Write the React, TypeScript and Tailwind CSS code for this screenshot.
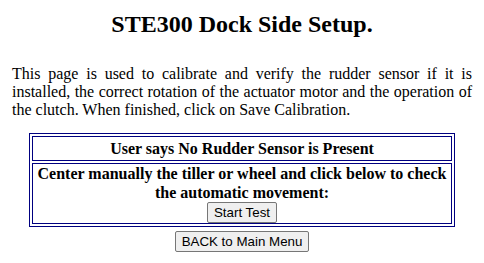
export default function App() {
  return (
    <div className="min-h-[263px] bg-white px-[12px] pt-[10px] font-['Liberation_Serif',serif] text-black">
      <h2 className="text-center text-[24px] font-bold leading-[28px]">STE300 Dock Side Setup.</h2>
      <p className="mt-[27px] text-justify text-[16px] leading-[18px]">
        This page is used to calibrate and verify the rudder sensor if it is installed, the correct rotation of the
        actuator motor and the operation of the clutch. When finished, click on Save Calibration.
      </p>
      <div className="mx-auto mt-[14px] flex w-[426px] flex-col gap-[2px] border border-[#000080] p-[2px]">
        <div className="border border-[#000080] py-[2px] text-center text-[16px] font-bold leading-[19px]">
          User says No Rudder Sensor is Present
        </div>
        <div className="flex flex-col items-center border border-[#000080] pt-[1px] text-center text-[16px] font-bold leading-[18.5px]">
          <span>Center manually the tiller or wheel and click below to check the automatic movement:</span>
          <Btn label="Start Test" />
        </div>
      </div>
      <div className="mt-[4px] flex justify-center">
        <Btn label="BACK to Main Menu" />
      </div>
    </div>
  );
}

function Btn({ label }: { label: string }) {
  return (
    <button className="h-[21px] rounded-[2px] border border-[#767676] bg-[#efefef] px-[6px] font-['Liberation_Sans',sans-serif] text-[13.33px] font-normal leading-[19px] text-black">
      {label}
    </button>
  );
}
